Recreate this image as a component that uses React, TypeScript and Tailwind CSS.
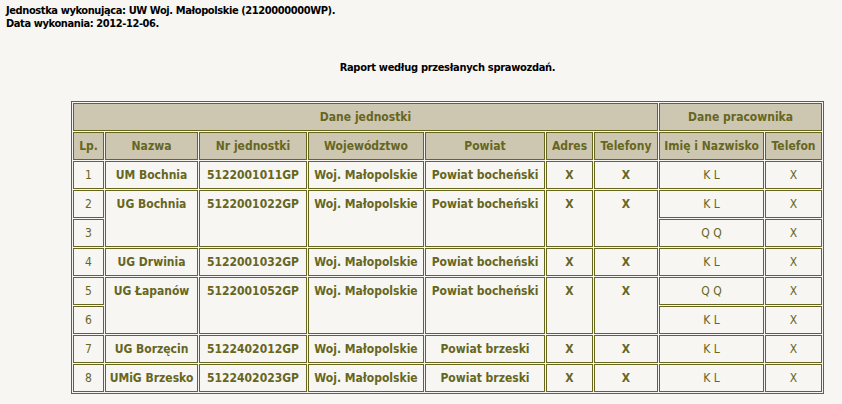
const font = { fontFamily: '"DejaVu Sans Condensed", "DejaVu Sans", Tahoma, sans-serif' };

type Employee = { name: string; phone: string };
type Unit = {
  lp: number;
  name: string;
  nr: string;
  woj: string;
  powiat: string;
  employees: Employee[];
};

const units: Unit[] = [
  { lp: 1, name: "UM Bochnia", nr: "5122001011GP", woj: "Woj. Małopolskie", powiat: "Powiat bocheński", employees: [{ name: "K L", phone: "X" }] },
  { lp: 2, name: "UG Bochnia", nr: "5122001022GP", woj: "Woj. Małopolskie", powiat: "Powiat bocheński", employees: [{ name: "K L", phone: "X" }, { name: "Q Q", phone: "X" }] },
  { lp: 4, name: "UG Drwinia", nr: "5122001032GP", woj: "Woj. Małopolskie", powiat: "Powiat bocheński", employees: [{ name: "K L", phone: "X" }] },
  { lp: 5, name: "UG Łapanów", nr: "5122001052GP", woj: "Woj. Małopolskie", powiat: "Powiat bocheński", employees: [{ name: "Q Q", phone: "X" }, { name: "K L", phone: "X" }] },
  { lp: 7, name: "UG Borzęcin", nr: "5122402012GP", woj: "Woj. Małopolskie", powiat: "Powiat brzeski", employees: [{ name: "K L", phone: "X" }] },
  { lp: 8, name: "UMiG Brzesko", nr: "5122402023GP", woj: "Woj. Małopolskie", powiat: "Powiat brzeski", employees: [{ name: "K L", phone: "X" }] },
];

const cell = "border border-[#66661f] text-center align-top p-0 pt-[6px] whitespace-nowrap";
const head = cell + " bg-[#cdc7b1] font-bold";

export default function App() {
  return (
    <div className="min-h-[404px] bg-[#f7f6f3] text-[11px] leading-[13px]" style={font}>
      <div className="pt-[4px] pl-[6px] font-bold text-black tracking-[-0.4px]">
        <div>Jednostka wykonująca: UW Woj. Małopolskie (2120000000WP).</div>
        <div>Data wykonania: 2012-12-06.</div>
      </div>

      <div className="ml-[71px] w-[753px]">
        <div className="mt-[31px] text-center font-bold text-black tracking-[-0.3px]">Raport według przesłanych sprawozdań.</div>

        <table className="mt-[27px] w-[753px] table-fixed border-separate border-spacing-[1px] border border-[#66661f] text-[12px] leading-[14px] text-[#66661f]">
          <colgroup>
            <col className="w-[31px]" />
            <col className="w-[93px]" />
            <col className="w-[108px]" />
            <col className="w-[116px]" />
            <col className="w-[120px]" />
            <col className="w-[47px]" />
            <col className="w-[64px]" />
            <col className="w-[105px]" />
            <col className="w-[57px]" />
          </colgroup>
          <thead>
            <tr className="h-[28px]">
              <th colSpan={7} className={head}>Dane jednostki</th>
              <th colSpan={2} className={head}>Dane pracownika</th>
            </tr>
            <tr className="h-[28px]">
              <th className={head}>Lp.</th>
              <th className={head}>Nazwa</th>
              <th className={head}>Nr jednostki</th>
              <th className={head}>Województwo</th>
              <th className={head}>Powiat</th>
              <th className={head}>Adres</th>
              <th className={head}>Telefony</th>
              <th className={head}>Imię i Nazwisko</th>
              <th className={head}>Telefon</th>
            </tr>
          </thead>
          <tbody>
            {units.map((u) =>
              u.employees.map((e, i) => (
                <tr key={u.lp + "-" + i} className="h-[28px]">
                  <td className={cell}>{u.lp + i}</td>
                  {i === 0 && (
                    <>
                      <td rowSpan={u.employees.length} className={cell + " font-bold"}>{u.name}</td>
                      <td rowSpan={u.employees.length} className={cell + " font-bold"}>{u.nr}</td>
                      <td rowSpan={u.employees.length} className={cell + " font-bold"}>{u.woj}</td>
                      <td rowSpan={u.employees.length} className={cell + " font-bold"}>{u.powiat}</td>
                      <td rowSpan={u.employees.length} className={cell + " font-bold"}>X</td>
                      <td rowSpan={u.employees.length} className={cell + " font-bold"}>X</td>
                    </>
                  )}
                  <td className={cell}>{e.name}</td>
                  <td className={cell}>{e.phone}</td>
                </tr>
              ))
            )}
          </tbody>
        </table>
      </div>
    </div>
  );
}
